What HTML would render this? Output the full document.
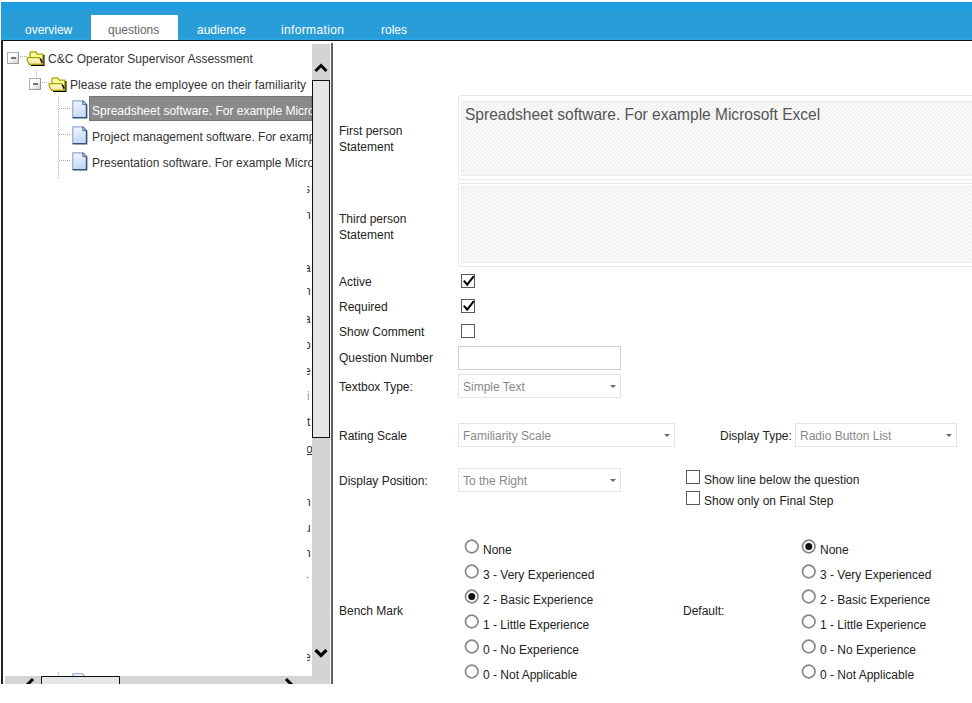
<!DOCTYPE html>
<html><head><meta charset="utf-8">
<style>
*{margin:0;padding:0;box-sizing:border-box}
html,body{width:972px;height:703px;overflow:hidden;background:#fff}
body{position:relative;font-family:"Liberation Sans",sans-serif;font-size:12px;color:#222}
.a{position:absolute;white-space:nowrap}
.t{position:absolute;white-space:nowrap;line-height:14px}
#hdr{left:1px;top:2px;width:971px;height:38px;background:linear-gradient(#1d9de0 0,#1d9de0 7px,#289dd8 8px,#289dd8 35px,#2aa5e2 38px)}
#hline{left:1px;top:40px;width:971px;height:1px;background:#111}
.tab{position:absolute;top:23px;color:#fff;font-size:13px;line-height:14px;transform:scaleX(0.92);transform-origin:0 0}
#acttab{left:91px;top:15px;width:87px;height:25px;background:#fff}
#lpanel{left:1px;top:40px;width:2px;height:644px;background:#222}
#rborder{left:331px;top:43px;width:2px;height:641px;background:#606060}
#vtrack{left:312px;top:44px;width:18px;height:640px;background:#d4d4d4}
#vthumb{left:312px;top:80px;width:18px;height:358px;background:#e6e6e6;border:1px solid #111}
#htrack{left:5px;top:676px;width:307px;height:8px;background:#d4d4d4}
#hthumb{left:41px;top:676px;width:79px;height:8px;background:#e6e6e6;border:1px solid #111;border-bottom:none}
.lbl{position:absolute;white-space:nowrap;color:#222;line-height:16.5px}
.ta{position:absolute;left:458px;width:520px;border:1px solid #e8e8e8;border-radius:2px;background:#fff}
.ta svg{position:absolute;left:2px;top:2px}
.cb{position:absolute;width:14px;height:14px;border:1px solid #5a5a5a;background:#fff}
.inp{position:absolute;border:1px solid #cfcfcf;background:#fff}
.dd{position:absolute;border:1px solid #e4e4e4;background:#fff;color:#888}
.dd span{position:absolute;left:4px;top:5px;line-height:14px}
.dd i{position:absolute;top:10px;width:0;height:0;border-left:3px solid transparent;border-right:3px solid transparent;border-top:3px solid #666}
.rd{position:absolute;width:14px;height:14px;border:1.5px solid #8a8a8a;border-radius:50%;background:#fff}
.rd.on:after{content:"";position:absolute;left:2.5px;top:2.5px;width:6px;height:6px;border-radius:50%;background:#111}
.ebox{position:absolute;width:12px;height:12px;border:1px solid #b0b0b0;border-right-color:#9a9a9a;border-bottom-color:#9a9a9a;background:linear-gradient(135deg,#fff 35%,#d0d0d0)}
.ebox b{position:absolute;left:3px;top:4px;width:5px;height:1.8px;background:#707070}
.hdot{position:absolute;height:1px;background:repeating-linear-gradient(90deg,#aaa 0,#aaa 1px,transparent 1px,transparent 2px)}
.vdot{position:absolute;width:1px;background:repeating-linear-gradient(180deg,#aaa 0,#aaa 1px,transparent 1px,transparent 2px)}
</style></head><body>
<div id="hdr" class="a"></div>
<div id="acttab" class="a"></div>
<div id="hline" class="a"></div>
<div class="tab" style="left:25px">overview</div>
<div class="tab" style="left:108px;color:#666">questions</div>
<div class="tab" style="left:197px">audience</div>
<div class="tab" style="left:281px;letter-spacing:0.4px">information</div>
<div class="tab" style="left:381px">roles</div>

<!-- left panel -->
<div id="lpanel" class="a"></div>
<!-- tree -->
<div class="ebox" style="left:7px;top:52px"><b></b></div>
<div class="hdot" style="left:20px;top:56px;width:7px"></div>
<svg class="a" style="left:26px;top:51px" width="20" height="16" viewBox="0 0 20 16">
<defs><linearGradient id="fg1" x1="0" y1="0" x2="0" y2="1"><stop offset="0" stop-color="#ffffd0"/><stop offset="0.5" stop-color="#fff2b0"/><stop offset="1" stop-color="#ffd8b0"/></linearGradient></defs>
<path d="M5,14.2 H17.8 V4" fill="none" stroke="#000" stroke-width="1.4"/>
<path d="M4,12 V2.4 Q4,0.9 5.5,0.9 H9.8 L11.2,3.1 H16.8 V13.2 H4 Z" fill="#ffff9e" stroke="#a6a300" stroke-width="1.3"/>
<path d="M2.2,6.6 H13.6 L16.2,12.6 V13.4 H3.6 Q1,10 1,7.6 Q1,6.6 2.2,6.6 Z" fill="url(#fg1)" stroke="#a6a300" stroke-width="1.3"/>
<path d="M14.4,7.6 L16.2,11.6" stroke="#111" stroke-width="1.5"/>
</svg>
<div class="t" style="left:48px;top:52px;color:#333">C&amp;C Operator Supervisor Assessment</div>
<div class="vdot" style="left:36px;top:70px;height:8px"></div>
<div class="ebox" style="left:29px;top:78px"><b></b></div>
<div class="hdot" style="left:42px;top:82px;width:7px"></div>
<svg class="a" style="left:48px;top:77px" width="20" height="16" viewBox="0 0 20 16">
<defs><linearGradient id="fg2" x1="0" y1="0" x2="0" y2="1"><stop offset="0" stop-color="#ffffd0"/><stop offset="0.5" stop-color="#fff2b0"/><stop offset="1" stop-color="#ffd8b0"/></linearGradient></defs>
<path d="M5,14.2 H17.8 V4" fill="none" stroke="#000" stroke-width="1.4"/>
<path d="M4,12 V2.4 Q4,0.9 5.5,0.9 H9.8 L11.2,3.1 H16.8 V13.2 H4 Z" fill="#ffff9e" stroke="#a6a300" stroke-width="1.3"/>
<path d="M2.2,6.6 H13.6 L16.2,12.6 V13.4 H3.6 Q1,10 1,7.6 Q1,6.6 2.2,6.6 Z" fill="url(#fg2)" stroke="#a6a300" stroke-width="1.3"/>
<path d="M14.4,7.6 L16.2,11.6" stroke="#111" stroke-width="1.5"/>
</svg>
<div class="t" style="left:70px;top:78px;color:#333;letter-spacing:0.06px">Please rate the employee on their familiarity</div>
<div class="vdot" style="left:58px;top:97px;height:81px"></div>
<div class="a" style="left:89px;top:96px;width:223px;height:25px;background:#8a8a8a;border:1px solid #777"></div>
<div class="hdot" style="left:59px;top:108px;width:11px"></div>
<svg class="a" style="left:72px;top:100px" width="16" height="19" viewBox="0 0 16 19">
<defs><linearGradient id="dg1" x1="0" y1="0" x2="0.3" y2="1"><stop offset="0" stop-color="#f6f9ff"/><stop offset="1" stop-color="#c6d8f6"/></linearGradient></defs>
<path d="M0.8,0.8 H10.5 L14.5,4.8 V17.5 H0.8 Z" fill="url(#dg1)" stroke="#90a8cc" stroke-width="1.2"/>
<path d="M14.6,4.5 V17.7 H0.6" fill="none" stroke="#34507c" stroke-width="1.5"/>
<path d="M10.5,0.8 L14.6,4.8" fill="none" stroke="#34507c" stroke-width="1.3"/>
<path d="M10.8,1 V4.6 H14.3" fill="#b8c8e4" stroke="#4a6590" stroke-width="0.9"/>
</svg>
<div class="t" style="left:92px;top:104px;color:#fff;width:220px;overflow:hidden">Spreadsheet software. For example Microsoft Excel</div>
<div class="hdot" style="left:59px;top:134px;width:11px"></div>
<svg class="a" style="left:72px;top:126px" width="16" height="19" viewBox="0 0 16 19">
<defs><linearGradient id="dg2" x1="0" y1="0" x2="0.3" y2="1"><stop offset="0" stop-color="#f6f9ff"/><stop offset="1" stop-color="#c6d8f6"/></linearGradient></defs>
<path d="M0.8,0.8 H10.5 L14.5,4.8 V17.5 H0.8 Z" fill="url(#dg2)" stroke="#90a8cc" stroke-width="1.2"/>
<path d="M14.6,4.5 V17.7 H0.6" fill="none" stroke="#34507c" stroke-width="1.5"/>
<path d="M10.5,0.8 L14.6,4.8" fill="none" stroke="#34507c" stroke-width="1.3"/>
<path d="M10.8,1 V4.6 H14.3" fill="#b8c8e4" stroke="#4a6590" stroke-width="0.9"/>
</svg>
<div class="t" style="left:92px;top:130px;color:#333;width:220px;overflow:hidden">Project management software. For example Microsoft Project</div>
<div class="hdot" style="left:59px;top:160px;width:11px"></div>
<svg class="a" style="left:72px;top:152px" width="16" height="19" viewBox="0 0 16 19">
<defs><linearGradient id="dg3" x1="0" y1="0" x2="0.3" y2="1"><stop offset="0" stop-color="#f6f9ff"/><stop offset="1" stop-color="#c6d8f6"/></linearGradient></defs>
<path d="M0.8,0.8 H10.5 L14.5,4.8 V17.5 H0.8 Z" fill="url(#dg3)" stroke="#90a8cc" stroke-width="1.2"/>
<path d="M14.6,4.5 V17.7 H0.6" fill="none" stroke="#34507c" stroke-width="1.5"/>
<path d="M10.5,0.8 L14.6,4.8" fill="none" stroke="#34507c" stroke-width="1.3"/>
<path d="M10.8,1 V4.6 H14.3" fill="#b8c8e4" stroke="#4a6590" stroke-width="0.9"/>
</svg>
<div class="t" style="left:92px;top:156px;color:#333;width:220px;overflow:hidden">Presentation software. For example Microsoft PowerPoint</div>
<div class="a" style="left:307px;top:181px;width:5px;height:16px;overflow:hidden"><span class="a" style="left:-3px;top:1px;color:#333;line-height:14px">s</span></div>
<div class="a" style="left:307px;top:207px;width:5px;height:16px;overflow:hidden"><span class="a" style="left:-3px;top:1px;color:#333;line-height:14px">n</span></div>
<div class="a" style="left:307px;top:260px;width:5px;height:16px;overflow:hidden"><span class="a" style="left:-3px;top:1px;color:#333;line-height:14px">a</span></div>
<div class="a" style="left:307px;top:283px;width:5px;height:16px;overflow:hidden"><span class="a" style="left:-3px;top:1px;color:#333;line-height:14px">n</span></div>
<div class="a" style="left:307px;top:311px;width:5px;height:16px;overflow:hidden"><span class="a" style="left:-3px;top:1px;color:#333;line-height:14px">a</span></div>
<div class="a" style="left:307px;top:337px;width:5px;height:16px;overflow:hidden"><span class="a" style="left:-3px;top:1px;color:#333;line-height:14px">o</span></div>
<div class="a" style="left:307px;top:363px;width:5px;height:16px;overflow:hidden"><span class="a" style="left:-3px;top:1px;color:#333;line-height:14px">e</span></div>
<div class="a" style="left:307px;top:388px;width:5px;height:16px;overflow:hidden"><span class="a" style="left:0px;top:1px;color:#99a;line-height:14px">i</span></div>
<div class="a" style="left:307px;top:414px;width:5px;height:16px;overflow:hidden"><span class="a" style="left:0px;top:1px;color:#333;line-height:14px">t</span></div>
<div class="a" style="left:307px;top:441px;width:5px;height:16px;overflow:hidden"><span class="a" style="left:-1px;top:1px;color:#333;line-height:14px;text-decoration:underline">o</span></div>
<div class="a" style="left:307px;top:494px;width:5px;height:16px;overflow:hidden"><span class="a" style="left:-3px;top:1px;color:#333;line-height:14px">n</span></div>
<div class="a" style="left:307px;top:520px;width:5px;height:16px;overflow:hidden"><span class="a" style="left:-3px;top:1px;color:#333;line-height:14px">u</span></div>
<div class="a" style="left:307px;top:545px;width:5px;height:16px;overflow:hidden"><span class="a" style="left:-3px;top:1px;color:#333;line-height:14px">n</span></div>
<div class="a" style="left:307px;top:572px;width:5px;height:16px;overflow:hidden"><span class="a" style="left:-3px;top:1px;color:#333;line-height:14px">r</span></div>
<div class="a" style="left:307px;top:649px;width:5px;height:16px;overflow:hidden"><span class="a" style="left:-3px;top:1px;color:#333;line-height:14px">e</span></div>
<div id="vtrack" class="a"></div>
<div id="vthumb" class="a"></div>
<svg class="a" style="left:314px;top:61px" width="14" height="13" viewBox="0 0 14 13"><path d="M1.5,10 L7,4.5 L12.5,10" fill="none" stroke="#000" stroke-width="3"/></svg>
<svg class="a" style="left:314px;top:647px" width="14" height="13" viewBox="0 0 14 13"><path d="M1.5,3 L7,8.5 L12.5,3" fill="none" stroke="#000" stroke-width="3.2"/></svg>
<div id="rborder" class="a"></div>
<div class="vdot" style="left:58px;top:672px;height:5px"></div>
<svg class="a" style="left:72px;top:673px" width="16" height="4" viewBox="0 0 16 4"><path d="M0.8,4 V0.8 H10.5 L13.5,3.8" fill="#eef3fc" stroke="#90a8cc" stroke-width="1.1"/></svg>
<div id="htrack" class="a"></div>
<div id="hthumb" class="a"></div>
<svg class="a" style="left:22px;top:674px" width="16" height="10" viewBox="0 0 16 10"><path d="M11,5 L5,11 L11,17" fill="none" stroke="#000" stroke-width="3"/></svg>
<svg class="a" style="left:281px;top:674px" width="16" height="10" viewBox="0 0 16 10"><path d="M5,5 L11,11 L5,17" fill="none" stroke="#000" stroke-width="3"/></svg>


<!-- right form -->
<div class="lbl" style="left:339px;top:122.5px">First person<br>Statement</div>
<div class="lbl" style="left:339px;top:210.5px">Third person<br>Statement</div>
<svg width="0" height="0" style="position:absolute"><defs><pattern id="hatch" width="4" height="4" patternUnits="userSpaceOnUse"><rect width="4" height="4" fill="#fcfcfc"/><path d="M-1,1 L1,-1 M0,4 L4,0 M3,5 L5,3" stroke="#ececec" stroke-width="1.1"/></pattern></defs></svg>
<div class="ta" style="top:95px;height:85px"><svg style="top:5px" width="520" height="75"><rect x="0.5" y="0.5" width="530" height="74" fill="url(#hatch)" stroke="#ededed"/></svg></div>
<div class="ta" style="top:183px;height:84px"><svg style="top:2px" width="520" height="77"><rect x="0.5" y="0.5" width="530" height="76" fill="url(#hatch)" stroke="#ededed"/></svg></div>
<div class="a" style="left:465px;top:105px;font-size:16.5px;color:#555;line-height:18px;transform:scaleX(0.94);transform-origin:0 0">Spreadsheet software. For example Microsoft Excel</div>

<div class="t" style="left:339px;top:275px">Active</div>
<div class="t" style="left:339px;top:300px">Required</div>
<div class="t" style="left:339px;top:325px">Show Comment</div>
<div class="t" style="left:339px;top:351px">Question Number</div>
<div class="t" style="left:339px;top:380px">Textbox Type:</div>
<div class="cb" style="left:461px;top:274px"></div>
<div class="cb" style="left:461px;top:299px"></div>
<div class="cb" style="left:461px;top:324px"></div>
<svg class="a" style="left:461px;top:274px" width="14" height="14" viewBox="0 0 14 14"><path d="M2.8,6.6 L6.2,10.6 L12.8,2.2" fill="none" stroke="#000" stroke-width="2"/></svg>
<svg class="a" style="left:461px;top:299px" width="14" height="14" viewBox="0 0 14 14"><path d="M2.8,6.6 L6.2,10.6 L12.8,2.2" fill="none" stroke="#000" stroke-width="2"/></svg>

<div class="inp" style="left:458px;top:346px;width:163px;height:24px"></div>
<div class="dd" style="left:458px;top:374px;width:163px;height:24px"><span>Simple Text</span><i style="left:151px"></i></div>

<div class="t" style="left:339px;top:429px">Rating Scale</div>
<div class="dd" style="left:458px;top:423px;width:217px;height:24px"><span>Familiarity Scale</span><i style="left:205px"></i></div>
<div class="t" style="left:720px;top:429px">Display Type:</div>
<div class="dd" style="left:795px;top:423px;width:162px;height:24px"><span>Radio Button List</span><i style="left:150px"></i></div>
<div class="t" style="left:339px;top:474px">Display Position:</div>
<div class="dd" style="left:458px;top:468px;width:163px;height:24px"><span>To the Right</span><i style="left:151px"></i></div>
<div class="cb" style="left:686px;top:470px"></div>
<div class="cb" style="left:686px;top:491px"></div>
<div class="t" style="left:704px;top:473px">Show line below the question</div>
<div class="t" style="left:704px;top:494px">Show only on Final Step</div>

<div class="t" style="left:339px;top:604px">Bench Mark</div>
<div class="t" style="left:683px;top:604px">Default:</div>
<svg class="a" style="left:464px;top:539.4px" width="16" height="16" viewBox="0 0 16 16"><circle cx="7.75" cy="7.5" r="6.3" fill="#fff" stroke="#888" stroke-width="1.7"/></svg><div class="t" style="left:483px;top:543px">None</div>
<svg class="a" style="left:464px;top:564.4px" width="16" height="16" viewBox="0 0 16 16"><circle cx="7.75" cy="7.5" r="6.3" fill="#fff" stroke="#888" stroke-width="1.7"/></svg><div class="t" style="left:483px;top:568px">3 - Very Experienced</div>
<svg class="a" style="left:464px;top:589.4px" width="16" height="16" viewBox="0 0 16 16"><circle cx="7.75" cy="7.5" r="6.3" fill="#fff" stroke="#888" stroke-width="1.7"/><circle cx="7.75" cy="7.5" r="3.5" fill="#111"/></svg><div class="t" style="left:483px;top:593px">2 - Basic Experience</div>
<svg class="a" style="left:464px;top:614.4px" width="16" height="16" viewBox="0 0 16 16"><circle cx="7.75" cy="7.5" r="6.3" fill="#fff" stroke="#888" stroke-width="1.7"/></svg><div class="t" style="left:483px;top:618px">1 - Little Experience</div>
<svg class="a" style="left:464px;top:639.4px" width="16" height="16" viewBox="0 0 16 16"><circle cx="7.75" cy="7.5" r="6.3" fill="#fff" stroke="#888" stroke-width="1.7"/></svg><div class="t" style="left:483px;top:643px">0 - No Experience</div>
<svg class="a" style="left:464px;top:664.4px" width="16" height="16" viewBox="0 0 16 16"><circle cx="7.75" cy="7.5" r="6.3" fill="#fff" stroke="#888" stroke-width="1.7"/></svg><div class="t" style="left:483px;top:668px">0 - Not Applicable</div>
<svg class="a" style="left:801px;top:539.4px" width="16" height="16" viewBox="0 0 16 16"><circle cx="7.75" cy="7.5" r="6.3" fill="#fff" stroke="#888" stroke-width="1.7"/><circle cx="7.75" cy="7.5" r="3.5" fill="#111"/></svg><div class="t" style="left:820px;top:543px">None</div>
<svg class="a" style="left:801px;top:564.4px" width="16" height="16" viewBox="0 0 16 16"><circle cx="7.75" cy="7.5" r="6.3" fill="#fff" stroke="#888" stroke-width="1.7"/></svg><div class="t" style="left:820px;top:568px">3 - Very Experienced</div>
<svg class="a" style="left:801px;top:589.4px" width="16" height="16" viewBox="0 0 16 16"><circle cx="7.75" cy="7.5" r="6.3" fill="#fff" stroke="#888" stroke-width="1.7"/></svg><div class="t" style="left:820px;top:593px">2 - Basic Experience</div>
<svg class="a" style="left:801px;top:614.4px" width="16" height="16" viewBox="0 0 16 16"><circle cx="7.75" cy="7.5" r="6.3" fill="#fff" stroke="#888" stroke-width="1.7"/></svg><div class="t" style="left:820px;top:618px">1 - Little Experience</div>
<svg class="a" style="left:801px;top:639.4px" width="16" height="16" viewBox="0 0 16 16"><circle cx="7.75" cy="7.5" r="6.3" fill="#fff" stroke="#888" stroke-width="1.7"/></svg><div class="t" style="left:820px;top:643px">0 - No Experience</div>
<svg class="a" style="left:801px;top:664.4px" width="16" height="16" viewBox="0 0 16 16"><circle cx="7.75" cy="7.5" r="6.3" fill="#fff" stroke="#888" stroke-width="1.7"/></svg><div class="t" style="left:820px;top:668px">0 - Not Applicable</div>
</body></html>
